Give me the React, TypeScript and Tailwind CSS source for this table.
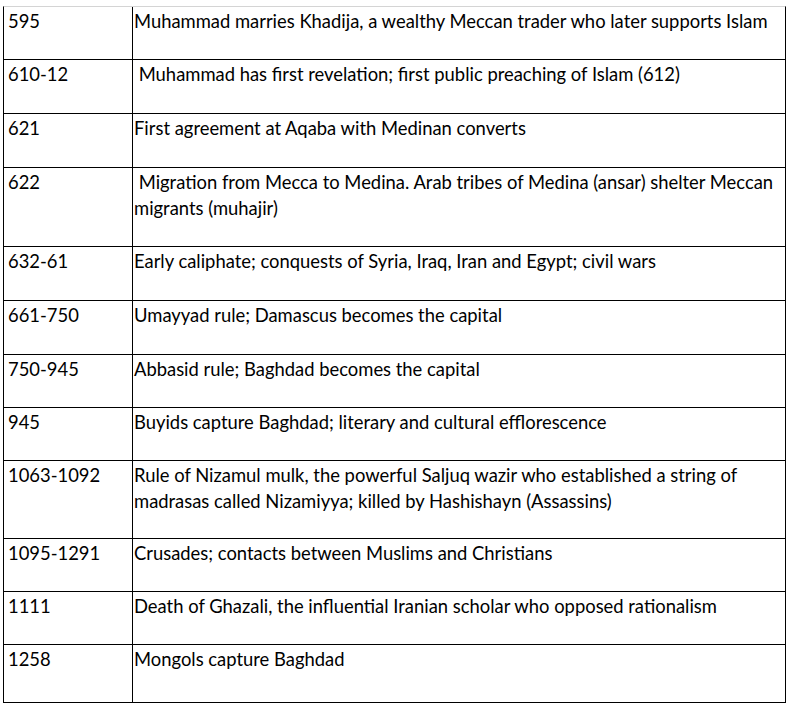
import React from "react";

const rows: { year: string; text: string[]; h: number }[] = [
  { year: "595", text: ["Muhammad marries Khadija, a wealthy Meccan trader who later supports Islam"], h: 53 },
  { year: "610-12", text: [" Muhammad has first revelation; first public preaching of Islam (612)"], h: 54 },
  { year: "621", text: ["First agreement at Aqaba with Medinan converts"], h: 54 },
  { year: "622", text: [" Migration from Mecca to Medina. Arab tribes of Medina (ansar) shelter Meccan", "migrants (muhajir)"], h: 79 },
  { year: "632-61", text: ["Early caliphate; conquests of Syria, Iraq, Iran and Egypt; civil wars"], h: 54 },
  { year: "661-750", text: ["Umayyad rule; Damascus becomes the capital"], h: 54 },
  { year: "750-945", text: ["Abbasid rule; Baghdad becomes the capital"], h: 53 },
  { year: "945", text: ["Buyids capture Baghdad; literary and cultural efflorescence"], h: 53 },
  { year: "1063-1092", text: ["Rule of Nizamul mulk, the powerful Saljuq wazir who established a string of", "madrasas called Nizamiyya; killed by Hashishayn (Assassins)"], h: 78 },
  { year: "1095-1291", text: ["Crusades; contacts between Muslims and Christians"], h: 53 },
  { year: "1111", text: ["Death of Ghazali, the influential Iranian scholar who opposed rationalism"], h: 53 },
  { year: "1258", text: ["Mongols capture Baghdad"], h: 58 },
];

export default function App() {
  return (
    <div
      className="w-[789px] h-[709px] bg-white pt-[6px] pl-[3px] text-black"
      style={{ fontFamily: "Lato, 'Liberation Sans', sans-serif" }}
    >
      <div className="w-[783px] border-l border-r border-b border-black border-t border-t-[#d4d4d4] flex flex-col">
        {rows.map((r, i) => (
          <div
            key={i}
            className={`flex ${i > 0 ? "border-t border-black" : ""}`}
            style={{ height: r.h - (i > 0 ? 0 : 1) }}
          >
            <div className="w-[129px] border-r border-black pl-[4px] pt-[1px] text-[18.4px] leading-[26px] whitespace-pre">
              {r.year}
            </div>
            <div className="flex-1 pl-[1px] pt-[1px] text-[18.4px] leading-[26px] whitespace-pre">
              {r.text.map((t, j) => (
                <div key={j}>{t}</div>
              ))}
            </div>
          </div>
        ))}
      </div>
    </div>
  );
}
